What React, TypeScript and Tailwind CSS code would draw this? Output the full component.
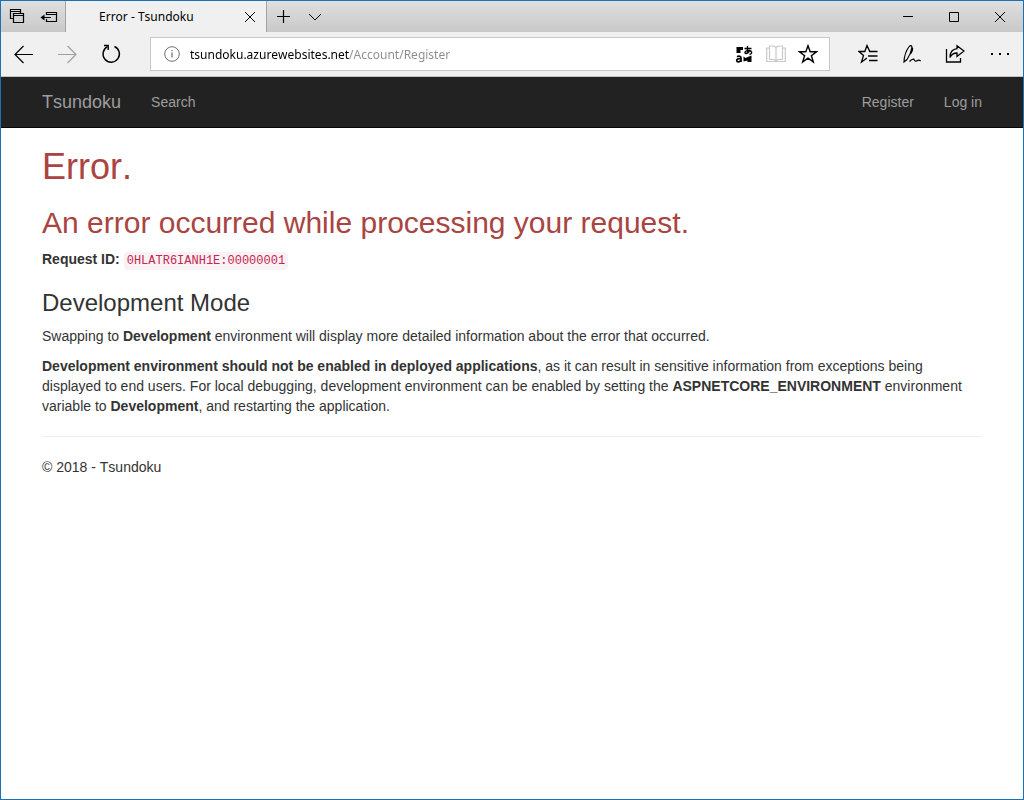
import type { ReactNode } from "react";

type IconProps = { className?: string; children: ReactNode; size?: number };

function Icon({ children, size = 20, className = "" }: IconProps) {
  return (
    <svg
      width={size}
      height={size}
      viewBox={`0 0 ${size} ${size}`}
      fill="none"
      stroke="currentColor"
      strokeWidth="1.3"
      className={`shrink-0 ${className}`}
      aria-hidden="true"
    >
      {children}
    </svg>
  );
}

type IconButtonProps = { label: string; className: string; children: ReactNode; disabled?: boolean };

function IconButton({ label, className, children, disabled }: IconButtonProps) {
  return (
    <button
      type="button"
      aria-label={label}
      disabled={disabled}
      className={`flex shrink-0 items-center justify-center ${className}`}
    >
      {children}
    </button>
  );
}

function TitleBar() {
  return (
    <div className="flex h-[31px] bg-linear-to-b from-[#dfdfe0] to-[#c9c9ca] text-black">
      <div className="flex border-r border-[#a3a3a3]">
        <IconButton label="Tabs you've set aside" className="w-8">
          <Icon size={16}>
            <path d="M4.500 9.500h-3v-9h10v4M1.500 2.500h10M4.500 4.500h10v9h-10zM4.500 6.500h10" strokeWidth="1.200" />
          </Icon>
        </IconButton>
        <IconButton label="Set these tabs aside" className="w-8">
          <Icon size={18}>
            <path d="M6.500 7V4.500h10v9h-10V11M6.500 6.500h10M1 9.500h10" strokeWidth="1.200" />
            <path d="M.5 9.500L4.500 6.500v6z" fill="currentColor" stroke="none" />
          </Icon>
        </IconButton>
      </div>
      <div className="flex w-[201px] items-center border-r border-[#a3a3a3] bg-[#f0f0f0] pl-[33px]">
        <span className="grow text-xs">Error - Tsundoku</span>
        <IconButton label="Close tab" className="h-full w-8">
          <Icon size={14}>
            <path d="M2 2l10 10M12 2L2 12" strokeWidth="1" />
          </Icon>
        </IconButton>
      </div>
      <IconButton label="New tab" className="w-8">
        <Icon size={15}>
          <path d="M7.5 1v13M1 7.5h13" strokeWidth="1.2" />
        </Icon>
      </IconButton>
      <IconButton label="Show tab previews" className="w-8">
        <Icon size={14}>
          <path d="M1 4l6 6 6-6" strokeWidth="1" />
        </Icon>
      </IconButton>
      <div className="ml-auto flex">
        <IconButton label="Minimize" className="w-[46px]">
          <Icon size={12}>
            <path d="M1 5.500h10" strokeWidth="1" />
          </Icon>
        </IconButton>
        <IconButton label="Maximize" className="w-[46px]">
          <Icon size={12}>
            <path d="M1.5 1.5h9v9h-9z" strokeWidth="1" />
          </Icon>
        </IconButton>
        <IconButton label="Close" className="w-[46px]">
          <Icon size={12}>
            <path d="M1 1l10 10M11 1L1 11" strokeWidth="1" />
          </Icon>
        </IconButton>
      </div>
    </div>
  );
}

function Toolbar() {
  return (
    <div className="flex h-[45px] items-center border-b border-[#c4c4c4] bg-[#f0f0f0] text-black">
      <IconButton label="Back" className="h-full w-11">
        <Icon>
          <path d="M20 10.500H2.500M10.500 2L2 10.500l8.500 8.500" strokeWidth="1.200" />
        </Icon>
      </IconButton>
      <IconButton label="Forward" className="h-full w-11 text-[#a0a0a0]" disabled>
        <Icon>
          <path d="M1 10.500h18M10.500 2l8.500 8.500-8.500 8.500" strokeWidth="1.200" />
        </Icon>
      </IconButton>
      <IconButton label="Refresh" className="h-full w-11">
        <Icon>
          <path d="M6.500 2.700A8.200 8.200 0 1 0 13.500 2.500" strokeWidth="1.400" />
          <path d="M3 1.500h4.200v4.500" strokeWidth="1.400" />
        </Icon>
      </IconButton>
      <div className="ml-[17px] flex h-[34px] grow items-center border border-[#c8c8c8] bg-white pl-3">
        <Icon size={18} className="text-[#707070]">
          <circle cx="9" cy="9" r="7.300" strokeWidth="1" />
          <path d="M9 7.500v5M9 5v1.300" strokeWidth="1.200" />
        </Icon>
        <input
          type="text"
          aria-label="Address"
          defaultValue="tsundoku.azurewebsites.net/Account/Register"
          className="ml-[9px] h-6 min-w-0 grow bg-linear-to-r from-black from-[159px] to-[#8c8c8c] to-[159px] bg-clip-text text-xs text-transparent caret-black outline-none"
        />
        <IconButton label="Translate" className="h-full w-8">
          <Icon>
            <path d="M2.500 3H9v3H6.500v3h-4z" fill="currentColor" stroke="none" />
            <path d="M10.500 4.500h7M13.500 2c-.3 3 0 5 .5 7.500M16 6c-1 2-2.500 3.500-4 3.500-2 0-1-3 2-3 4-.5 5 3 1.500 4" strokeWidth="1.400" />
            <path d="M3 12.700c2-1 4-.5 4 1.200V18M7 14.700c-3-.3-4.500.5-4.300 1.900.3 1.800 3.500 1.500 4.300-.4" strokeWidth="1.700" />
            <path d="M17.500 11.500v6.500h-4v-1.500L9.500 17.500v-5l2 1.500z" fill="currentColor" stroke="none" />
          </Icon>
        </IconButton>
        <IconButton label="Reading view" className="h-full w-8 text-[#c9c9c9]" disabled>
          <Icon>
            <path d="M10 3.500L8 2H3.500v13.500H8l2 1.500 2-1.500h4.500V2H12zM10 3.500V17M3.500 4H.700v13.500h18.600V4h-2.800" strokeWidth="1.200" />
          </Icon>
        </IconButton>
        <IconButton label="Add to favorites" className="h-full w-8">
          <Icon>
            <path d="M10 1.800l2.200 6h6.200l-5 3.900 1.900 6.200L10 14.200l-5.300 3.700 1.900-6.200-5-3.900h6.200z" strokeWidth="1.400" />
          </Icon>
        </IconButton>
        <span className="w-[5px]" />
      </div>
      <div className="ml-4 flex h-full">
        <IconButton label="Hub" className="w-11">
          <Icon>
            <path d="M18 7.500h-6.200L9 1.500 6.800 7.500H1l4.500 4-2 6.500L9 14M11 7.500h8.500M10 12h9.500M11 16.500h8.500" />
          </Icon>
        </IconButton>
        <IconButton label="Make a web note" className="w-[43px]">
          <Icon>
            <path
              d="M2 18c.2-5 2.500-12 5.200-15.500C8.300 1 10.300 1.300 9.800 4 9.200 7.500 7 12.500 5 15.500zM9.800 3.200c1.700.8.700 4-1.300 6.800M7.500 17.500c3.500-3.500 4.500-2.500 5-1.300.6 1.400 2 1.300 3.500.1 1-.7 1.700-.2 2.700.8"
              strokeWidth="1.200"
            />
          </Icon>
        </IconButton>
        <IconButton label="Share" className="w-11">
          <Icon>
            <path d="M1.500 5v13h14v-4M12 1.800l7 5.200-7 5.500V9C8.500 9 6.500 10.300 5 13.500c0-5 2.500-8.300 7-8.800z" />
          </Icon>
        </IconButton>
        <IconButton label="Settings and more" className="w-[46px]">
          <Icon>
            <path d="M1 9h2v2H1zM9 9h2v2H9zM17 9h2v2h-2z" fill="currentColor" stroke="none" />
          </Icon>
        </IconButton>
      </div>
    </div>
  );
}

function SiteNav() {
  return (
    <nav className="border-b border-[#080808] bg-[#222222] text-[#9d9d9d]">
      <div className="mx-auto flex h-[50px] max-w-[970px] items-center px-[15px]">
        <a href="#home" className="text-lg leading-5">
          Tsundoku
        </a>
        <a href="#search" className="ml-[30px]">
          Search
        </a>
        <div className="ml-auto flex gap-[30px]">
          <a href="#register">Register</a>
          <a href="#login">Log in</a>
        </div>
      </div>
    </nav>
  );
}

export default function App() {
  return (
    <div className="flex min-h-screen flex-col border border-[#1c70b8] bg-white">
      <header className="font-['Noto_Sans','Open_Sans',sans-serif] [font-kerning:none]">
        <TitleBar />
        <Toolbar />
      </header>
      <div className="font-['Liberation_Sans',Arial,sans-serif] text-sm leading-5 text-[#333333] [font-kerning:none]">
        <SiteNav />
        <main className="mx-auto max-w-[970px] px-[15px] pt-[19px]">
          <h1 className="text-4xl leading-10 text-[#a94442]">Error.</h1>
          <h2 className="mt-5 text-3xl leading-8 text-[#a94442]">
            An error occurred while processing your request.
          </h2>
          <p className="mt-[10px]">
            <strong>Request ID:</strong>{" "}
            <code className="rounded bg-[#f9f2f4] px-[3px] py-[2px] font-['Liberation_Mono',monospace] text-xs text-[#c7254e]">
              0HLATR6IANH1E:00000001
            </code>
          </p>
          <h3 className="mt-5 text-2xl leading-[27px]">Development Mode</h3>
          <p className="mt-[10px]">
            Swapping to <strong>Development</strong> environment will display more detailed information about the
            error that occurred.
          </p>
          <p className="mt-[10px]">
            <strong>Development environment should not be enabled in deployed applications</strong>, as it can result
            in sensitive information from exceptions being displayed to end users. For local debugging, development
            environment can be enabled by setting the <strong>ASPNETCORE_ENVIRONMENT</strong> environment variable to{" "}
            <strong>Development</strong>, and restarting the application.
          </p>
          <hr className="my-5 border-[#eeeeee]" />
          <footer>
            <p>© 2018 - Tsundoku</p>
          </footer>
        </main>
      </div>
    </div>
  );
}
